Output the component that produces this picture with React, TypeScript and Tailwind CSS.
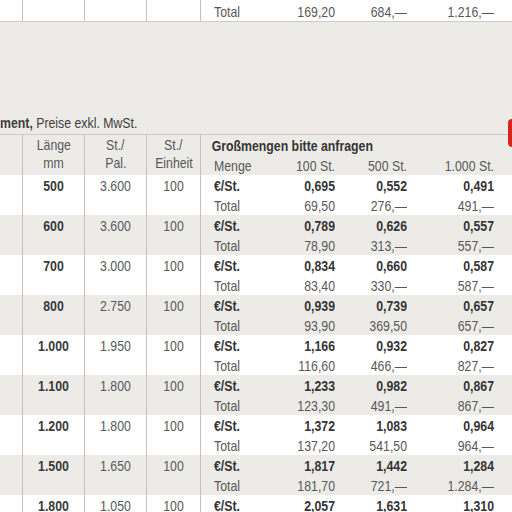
type Zeile = {
  laenge: string
  pal: string
  einheit: string
  st: string[]
  total: string[]
}

const ZEILEN: Zeile[] = [
  { laenge: '500', pal: '3.600', einheit: '100', st: ['0,695', '0,552', '0,491'], total: ['69,50', '276,—', '491,—'] },
  { laenge: '600', pal: '3.600', einheit: '100', st: ['0,789', '0,626', '0,557'], total: ['78,90', '313,—', '557,—'] },
  { laenge: '700', pal: '3.000', einheit: '100', st: ['0,834', '0,660', '0,587'], total: ['83,40', '330,—', '587,—'] },
  { laenge: '800', pal: '2.750', einheit: '100', st: ['0,939', '0,739', '0,657'], total: ['93,90', '369,50', '657,—'] },
  { laenge: '1.000', pal: '1.950', einheit: '100', st: ['1,166', '0,932', '0,827'], total: ['116,60', '466,—', '827,—'] },
  { laenge: '1.100', pal: '1.800', einheit: '100', st: ['1,233', '0,982', '0,867'], total: ['123,30', '491,—', '867,—'] },
  { laenge: '1.200', pal: '1.800', einheit: '100', st: ['1,372', '1,083', '0,964'], total: ['137,20', '541,50', '964,—'] },
  { laenge: '1.500', pal: '1.650', einheit: '100', st: ['1,817', '1,442', '1,284'], total: ['181,70', '721,—', '1.284,—'] },
  { laenge: '1.800', pal: '1.050', einheit: '100', st: ['2,057', '1,631', '1,310'], total: ['', '', ''] },
]

// schmale Schrift: Liberation Sans horizontal gestaucht (wie Arial Narrow)
const SCHMAL = 'scale-x-[0.82] whitespace-nowrap'
const LINIE = 'border-l border-[#c6c1bb]'
const PREISE = 'grid grid-cols-[49px_72px_72px_87px] pl-[13px]'

function Preiszeile({ label, werte, fett }: { label: string; werte: string[]; fett?: boolean }) {
  return (
    <div className={`${PREISE} h-5 leading-5 ${fett ? 'font-bold text-[#353535]' : 'text-[#585858]'}`}>
      <span className={`${SCHMAL} origin-left`}>{label}</span>
      {werte.map((w, i) => (
        <span key={i} className={`${SCHMAL} origin-right text-right`}>{w}</span>
      ))}
    </div>
  )
}

function Kopf({ oben, unten }: { oben: string; unten: string }) {
  return (
    <div className="flex flex-col items-center leading-[18px] pt-[1px]">
      <span className={SCHMAL}>{oben}</span>
      <span className={SCHMAL}>{unten}</span>
    </div>
  )
}

export default function App() {
  return (
    <main
      className="w-[512px] h-[512px] overflow-hidden bg-[#edebe8] text-[15px] text-[#585858]"
      style={{ fontFamily: '"Liberation Sans", Arial, sans-serif' }}
    >
      {/* letzte Zeile der Tabelle darüber */}
      <div className="flex h-[22px] bg-white border-b border-[#cfcac4]">
        <div className="w-[22px]" />
        <div className={`w-[62px] ${LINIE}`} />
        <div className={`w-[62px] ${LINIE}`} />
        <div className={`w-[54px] ${LINIE}`} />
        <div className={`flex-1 pt-[2px] ${LINIE}`}>
          <Preiszeile label="Total" werte={['169,20', '684,—', '1.216,—']} />
        </div>
      </div>

      {/* Zwischenraum mit Titel */}
      <div className="relative h-[113px] flex items-end border-b border-[#cfcac4]">
        <p className={`${SCHMAL} origin-left h-5 leading-5 mb-[1px] text-[#3e3e3e]`}>
          <span className="font-bold">ment,</span> Preise exkl. MwSt.
        </p>
        <div className="absolute right-0 top-[97px] w-[4px] h-[28px] bg-[#d4261c] rounded-l-[4px]" />
      </div>

      {/* Kopfzeile */}
      <div className="flex h-10">
        <div className="w-[22px]" />
        <div className={`w-[62px] ${LINIE}`}>
          <Kopf oben="Länge" unten="mm" />
        </div>
        <div className={`w-[62px] ${LINIE}`}>
          <Kopf oben="St./" unten="Pal." />
        </div>
        <div className={`w-[54px] ${LINIE}`}>
          <Kopf oben="St./" unten="Einheit" />
        </div>
        <div className={`flex-1 pt-px ${LINIE}`}>
          <p className={`${SCHMAL} origin-left pl-[13px] h-5 leading-5 font-bold text-[#353535]`}>
            Großmengen bitte anfragen
          </p>
          <Preiszeile label="Menge" werte={['100 St.', '500 St.', '1.000 St.']} />
        </div>
      </div>

      {/* Datenzeilen */}
      {ZEILEN.map((z, i) => (
        <div key={z.laenge} className={`flex h-10 pt-px ${i % 2 === 0 ? 'bg-white' : 'bg-[#edebe8]'}`}>
          <div className="w-[22px]" />
          <div className={`w-[62px] -mt-px pt-px ${LINIE}`}>
            <p className={`${SCHMAL} text-center leading-5 font-bold text-[#3a3a3a]`}>{z.laenge}</p>
          </div>
          <div className={`w-[62px] -mt-px pt-px ${LINIE}`}>
            <p className={`${SCHMAL} text-center leading-5`}>{z.pal}</p>
          </div>
          <div className={`w-[54px] -mt-px pt-px ${LINIE}`}>
            <p className={`${SCHMAL} text-center leading-5`}>{z.einheit}</p>
          </div>
          <div className={`flex-1 -mt-px pt-px ${LINIE}`}>
            <Preiszeile label="€/St." werte={z.st} fett />
            <Preiszeile label="Total" werte={z.total} />
          </div>
        </div>
      ))}
    </main>
  )
}
